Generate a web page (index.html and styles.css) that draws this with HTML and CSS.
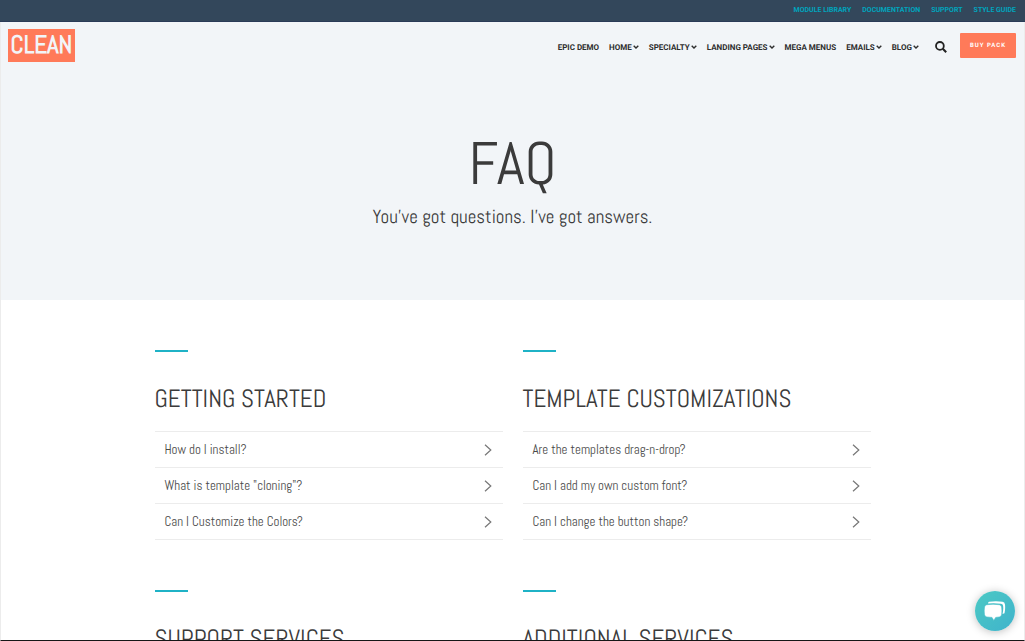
FILE: index.html
```html
<!DOCTYPE html>
<html lang="en">
<head>
<meta charset="utf-8">
<title>FAQ</title>
<link rel="stylesheet" href="styles.css">
</head>
<body>
<svg class="sprite" aria-hidden="true">
  <symbol id="caret" viewBox="0 0 6 4"><path d="M.7.7 3 3 5.3.7" fill="none" stroke="currentColor" stroke-width="1.4"/></symbol>
  <symbol id="chevron" viewBox="0 0 8 12"><path d="M1 .8 6.8 6 1 11.2" fill="none" stroke="currentColor" stroke-width="1.2"/></symbol>
</svg>
<nav class="topbar" aria-label="Resources">
  <a href="#">MODULE LIBRARY</a>
  <a href="#">DOCUMENTATION</a>
  <a href="#">SUPPORT</a>
  <a href="#">STYLE GUIDE</a>
</nav>
<div class="page">
  <div class="masthead">
    <header class="header">
      <a class="logo" href="#">CLEAN</a>
      <nav class="menu" aria-label="Main">
        <a href="#">EPIC DEMO</a>
        <a href="#">HOME<svg class="caret"><use href="#caret"/></svg></a>
        <a href="#">SPECIALTY<svg class="caret"><use href="#caret"/></svg></a>
        <a href="#">LANDING PAGES<svg class="caret"><use href="#caret"/></svg></a>
        <a href="#">MEGA MENUS</a>
        <a href="#">EMAILS<svg class="caret"><use href="#caret"/></svg></a>
        <a href="#">BLOG<svg class="caret"><use href="#caret"/></svg></a>
      </nav>
      <button class="search" type="button" aria-label="Search">
        <svg viewBox="0 0 12 12" width="12" height="12"><circle cx="4.9" cy="4.9" r="3.9" fill="none" stroke="currentColor" stroke-width="1.8"/><path d="m7.8 7.8 3.4 3.4" stroke="currentColor" stroke-width="2.1"/></svg>
      </button>
      <a class="buy" href="#">BUY PACK</a>
    </header>
    <div class="hero">
      <h1>FAQ</h1>
      <p>You've got questions. I've got answers.</p>
    </div>
  </div>
  <main class="topics">
    <section class="topic">
      <h2>GETTING STARTED</h2>
      <ul>
        <li><button type="button">How do I install?<svg class="chevron"><use href="#chevron"/></svg></button></li>
        <li><button type="button">What is template "cloning"?<svg class="chevron"><use href="#chevron"/></svg></button></li>
        <li><button type="button">Can I Customize the Colors?<svg class="chevron"><use href="#chevron"/></svg></button></li>
      </ul>
    </section>
    <section class="topic">
      <h2>TEMPLATE CUSTOMIZATIONS</h2>
      <ul>
        <li><button type="button">Are the templates drag-n-drop?<svg class="chevron"><use href="#chevron"/></svg></button></li>
        <li><button type="button">Can I add my own custom font?<svg class="chevron"><use href="#chevron"/></svg></button></li>
        <li><button type="button">Can I change the button shape?<svg class="chevron"><use href="#chevron"/></svg></button></li>
      </ul>
    </section>
    <section class="topic">
      <h2>SUPPORT SERVICES</h2>
    </section>
    <section class="topic">
      <h2>ADDITIONAL SERVICES</h2>
    </section>
  </main>
</div>
<button class="chat" type="button" aria-label="Open chat">
  <svg viewBox="0 0 22 20" width="22" height="20"><path d="M5 .8Q12-.2 18.500.8 20.700 1 21 3.500 21.500 8 20.500 12.200L18.500 13Q19.700 8 19 4.500 18.700 2.800 17 2.700 11 2 4 2.500 4.200 1 5 .8Z" fill="#fff"/><path d="M2.800 3.700Q9 2.800 15.300 3.700 17.300 4 17.600 6 18.200 10 17.600 13.700 17.300 15.700 15.300 16L11.700 16.400 9.800 19.500 8 16.400 2.800 16Q.8 15.700.5 13.700-.1 10 .5 6 .8 4 2.800 3.700Z" fill="#fff" stroke="#45bec8" stroke-width=".6"/></svg>
</button>
</body>
</html>
```
FILE: styles.css
```css
* { box-sizing: border-box; }
body {
  display: flex;
  flex-direction: column;
  height: 100vh;
  margin: 0;
  color: #3b3b3b;
  background: #fff;
  font-family: Abel, "Roboto Condensed", "Liberation Sans Narrow", "Liberation Sans", sans-serif;
  text-rendering: geometricPrecision;
}
a { color: inherit; text-decoration: none; }
button { font: inherit; color: inherit; background: none; border: 0; padding: 0; cursor: pointer; }
.sprite { display: none; }
.page {
  flex: 1;
  min-height: 0;
  overflow: hidden;
  border: 1px solid #ececec;
  border-top: 0;
  border-bottom-color: #161616;
}
.topbar {
  display: flex;
  justify-content: flex-end;
  gap: 11px;
  padding: 0 9px 1px;
  background: #33475b;
  border-bottom: 1px solid #2a3b57;
  color: #00a4bd;
  font: 700 7px/20px Roboto, sans-serif;
}
.masthead { background: #f2f5f8; }
.header { display: flex; align-items: center; padding: 7px 8px 0 7px; }
.logo {
  width: 67px;
  margin-right: auto;
  background: #ff7a59;
  color: #f2f5f8;
  font-size: 25px;
  font-weight: 700;
  line-height: 33px;
  text-align: center;
}
.menu { display: flex; gap: 10px; padding-top: 5px; color: #2d2d2d; font: 700 8px/12px Roboto, sans-serif; }
.caret { width: 6px; height: 4px; margin-left: 1px; vertical-align: 1px; }
.search { display: flex; margin: 2px 13px 0 16px; color: #222; }
.buy {
  padding: 0 10px;
  border-radius: 1px;
  background: #ff7a59;
  color: #fff;
  font: 700 6px/25px Roboto, sans-serif;
  letter-spacing: 1px;
}
.hero { padding: 64px 16px 68px; text-align: center; }
.hero h1 { margin: 0; font-size: 60px; font-weight: 300; line-height: 76px; }
.hero p { margin: 0; font-size: 19px; line-height: 30px; }
.topics {
  display: grid;
  grid-template-columns: 1fr 1fr;
  gap: 50px 20px;
  max-width: 716px;
  margin: 0 auto;
  padding-top: 50px;
}
.topic::before { content: ""; display: block; width: 33px; height: 2px; background: #1fb2c6; }
.topic h2 { margin: 32px 0 15px; font-size: 25px; font-weight: 300; line-height: 32px; white-space: nowrap; }
.topic ul { margin: 0; padding: 0; list-style: none; border-top: 1px solid #ececec; }
.topic li { border-bottom: 1px solid #ececec; }
.topic li button {
  display: flex;
  align-items: center;
  justify-content: space-between;
  width: 100%;
  padding: 0 11px 0 10px;
  color: #484848;
  font-size: 13px;
  line-height: 35px;
}
.chevron { width: 8px; height: 12px; color: #777; }
.chat {
  position: fixed;
  right: 10px;
  bottom: 10px;
  display: grid;
  place-items: center;
  width: 40px;
  height: 40px;
  border-radius: 50%;
  background: linear-gradient(135deg, #4cc9c4, #3fb3cc);
  box-shadow: 0 1px 8px rgba(0, 0, 0, .25);
}
```
